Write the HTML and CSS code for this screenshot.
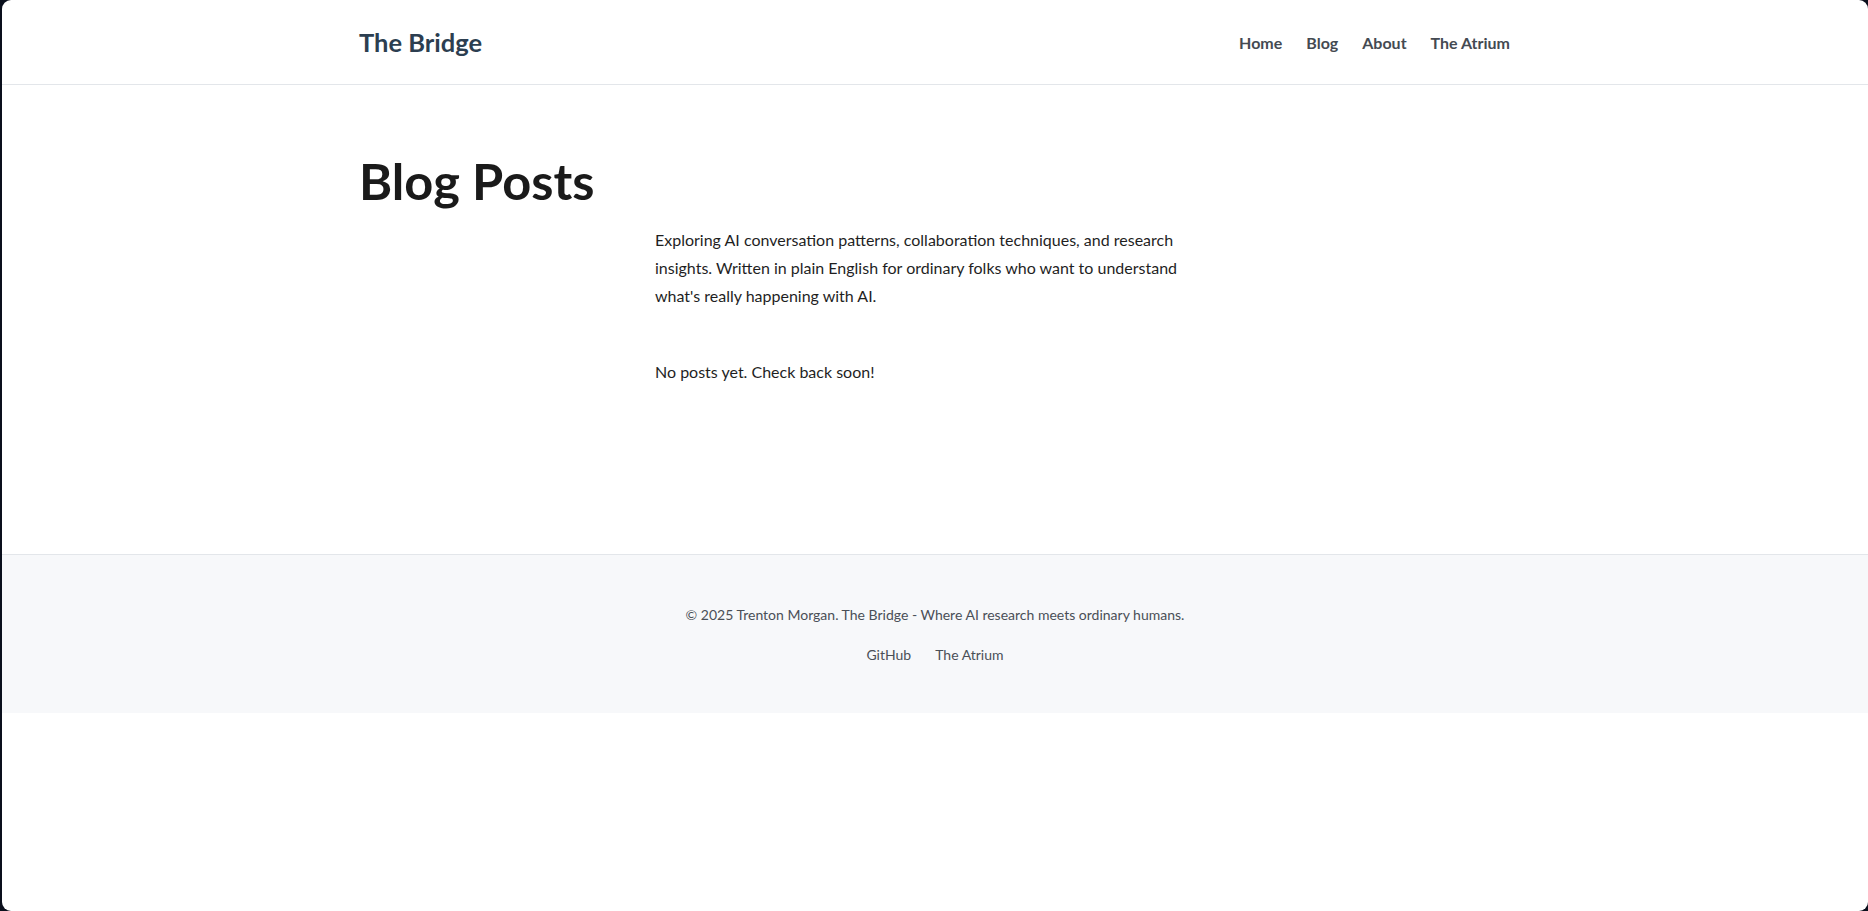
FILE: index.html
```html
<!DOCTYPE html>
<html lang="en">
<head>
<meta charset="utf-8">
<title>Blog Posts - The Bridge</title>
<link rel="stylesheet" href="styles.css">
</head>
<body>
<div class="window">
  <header class="site-header">
    <div class="container header-inner">
      <a class="logo" href="#">The Bridge</a>
      <nav class="nav">
        <a href="#">Home</a>
        <a href="#">Blog</a>
        <a href="#">About</a>
        <a href="#">The Atrium</a>
      </nav>
    </div>
  </header>
  <main class="main">
    <div class="container">
      <h1 class="page-title">Blog Posts</h1>
      <div class="column">
        <p class="intro">Exploring AI conversation patterns, collaboration techniques, and research insights. Written in plain English for ordinary folks who want to understand what's really happening with AI.</p>
        <p class="empty">No posts yet. Check back soon!</p>
      </div>
    </div>
  </main>
  <footer class="site-footer">
    <p class="copyright">© 2025 Trenton Morgan. The Bridge - Where AI research meets ordinary humans.</p>
    <div class="footer-links">
      <a href="#">GitHub</a>
      <a href="#">The Atrium</a>
    </div>
  </footer>
</div>
</body>
</html>
```
FILE: styles.css
```css
* { box-sizing: border-box; }
html, body { margin: 0; padding: 0; height: 100%; }
body {
  background: #0a0f1c;
  font-family: Lato, "Noto Sans", sans-serif;
  color: #1f1f1f;
}
.window {
  margin-left: 2px;
  height: 100%;
  background: #ffffff;
  border-radius: 9px;
  overflow: hidden;
}
.container {
  max-width: 1200px;
  margin: 0 auto;
  padding: 0 24px;
}
.site-header {
  border-bottom: 1px solid #e3e6ea;
}
.header-inner {
  height: 84px;
  display: flex;
  align-items: center;
  justify-content: space-between;
}
.logo {
  font-size: 25.5px;
  font-weight: 700;
  color: #2c3e50;
  text-decoration: none;
}
.nav {
  display: flex;
  gap: 24px;
  padding-right: 1px;
}
.nav a {
  font-size: 16px;
  font-weight: 700;
  color: #444a52;
  text-decoration: none;
}
.main {
  padding: 67px 0 168px;
}
.page-title {
  margin: 0 0 16px;
  font-size: 50.5px;
  line-height: 58px;
  font-weight: 700;
  color: #1a1a1a;
}
.column {
  max-width: 560px;
  margin: 0 auto;
}
.intro {
  margin: 0 0 48px;
  font-size: 16px;
  line-height: 28px;
}
.empty {
  margin: 0;
  font-size: 16px;
  line-height: 28px;
}
.site-footer {
  background: #f7f8fa;
  border-top: 1px solid #e3e6ea;
  padding: 48px 0 46px;
  text-align: center;
  font-size: 14px;
  color: #4a4f57;
}
.copyright {
  margin: 0 0 16px;
  line-height: 24px;
}
.footer-links {
  display: flex;
  justify-content: center;
  gap: 24px;
  line-height: 24px;
}
.footer-links a {
  color: #4a4f57;
  text-decoration: none;
}
```
